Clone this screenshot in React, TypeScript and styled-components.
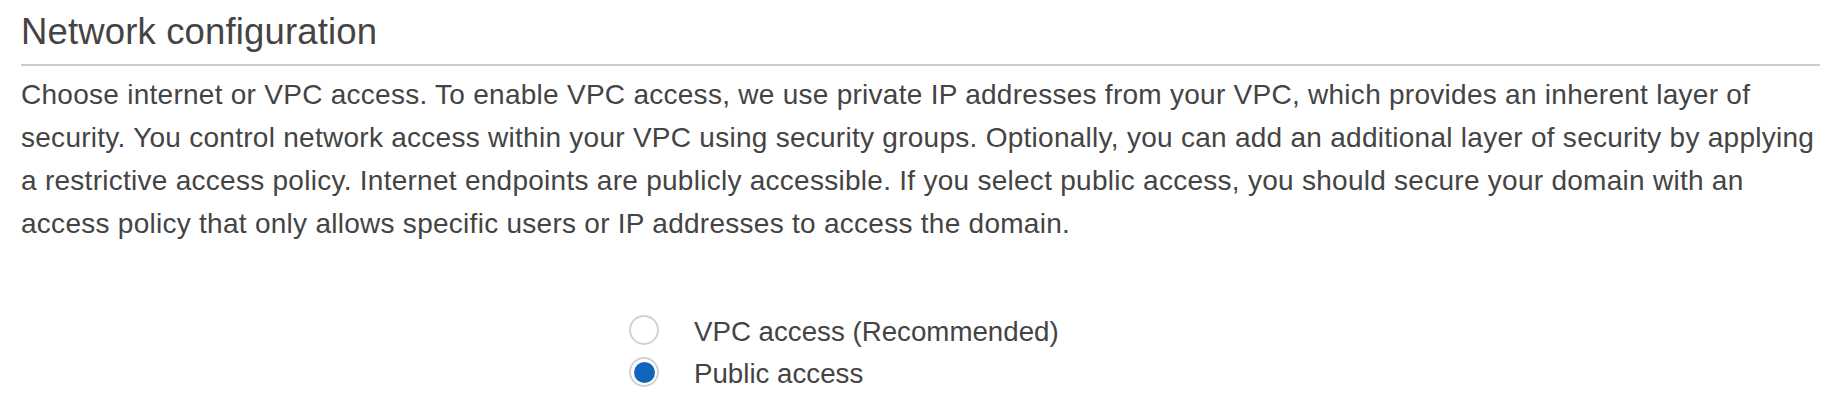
import React, { useState } from "react";
import styled, { createGlobalStyle } from "styled-components";

const GlobalStyle = createGlobalStyle`
  html, body {
    margin: 0;
    padding: 0;
    background: #ffffff;
  }
  body {
    font-family: "Liberation Sans", Arial, Helvetica, sans-serif;
    color: #444444;
  }
`;

const Section = styled.section`
  padding: 10px 16px 0 21px;
  box-sizing: border-box;
  width: 1836px;
`;

const Title = styled.h2`
  margin: 0;
  padding-bottom: 11px;
  font-size: 36.5px;
  font-weight: 400;
  letter-spacing: 0.15px;
  line-height: 43px;
  color: #444444;
  border-bottom: 2px solid #cccccc;
`;

const Description = styled.p`
  margin: 7px 0 0 0;
  font-size: 28px;
  letter-spacing: 0.27px;
  line-height: 43px;
  color: #444444;
`;

const FormRow = styled.div`
  display: grid;
  grid-template-columns: 608px 1fr;
  margin-top: 64px;
`;

const RadioList = styled.div`
  grid-column: 2;
  display: flex;
  flex-direction: column;
`;

const RadioLabel = styled.label`
  display: flex;
  align-items: center;
  height: 42px;
  gap: 35px;
  font-size: 27.7px;
  color: #444444;
  cursor: pointer;
`;

const RadioCircle = styled.span<{ $checked: boolean }>`
  width: 30px;
  height: 30px;
  box-sizing: border-box;
  border-radius: 50%;
  border: 2px solid #d2d2d2;
  background: #ffffff;
  display: flex;
  align-items: center;
  justify-content: center;
  flex-shrink: 0;

  &::after {
    content: "";
    width: 21px;
    height: 21px;
    border-radius: 50%;
    background: #1166bb;
    display: ${(p) => (p.$checked ? "block" : "none")};
  }
`;

const HiddenInput = styled.input`
  position: absolute;
  opacity: 0;
  width: 0;
  height: 0;
  margin: 0;
`;

const LabelText = styled.span`
  line-height: 42px;
  padding-top: 3px;
`;

const options = [
  { value: "vpc", label: "VPC access (Recommended)" },
  { value: "public", label: "Public access" },
];

export default function App() {
  const [selected, setSelected] = useState("public");
  return (
    <>
      <GlobalStyle />
      <Section>
        <Title>Network configuration</Title>
        <Description>
          Choose internet or VPC access. To enable VPC access, we use private IP addresses from your VPC, which
          provides an inherent layer of security. You control network access within your VPC using security groups.
          Optionally, you can add an additional layer of security by applying a restrictive access policy. Internet
          endpoints are publicly accessible. If you select public access, you should secure your domain with an
          access policy that only allows specific users or IP addresses to access the domain.
        </Description>
        <FormRow>
          <RadioList>
            {options.map((o) => (
              <RadioLabel key={o.value}>
                <HiddenInput
                  type="radio"
                  name="network"
                  value={o.value}
                  checked={selected === o.value}
                  onChange={() => setSelected(o.value)}
                />
                <RadioCircle $checked={selected === o.value} />
                <LabelText>{o.label}</LabelText>
              </RadioLabel>
            ))}
          </RadioList>
        </FormRow>
      </Section>
    </>
  );
}
